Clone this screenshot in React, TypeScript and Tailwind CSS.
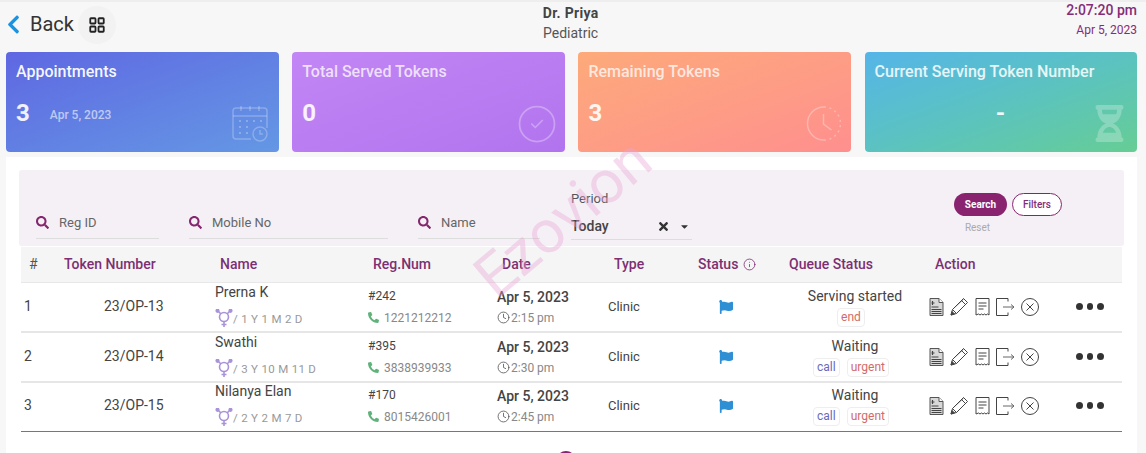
import { ReactNode } from 'react';
import { CircleCheck, Clock, Info, LayoutGrid } from 'lucide-react';
import { FaCaretDown, FaChevronLeft, FaFlag, FaHourglassHalf, FaPhoneAlt, FaSearch, FaTimes } from 'react-icons/fa';

interface Row {
  no: number;
  token: string;
  name: string;
  age: string;
  reg: string;
  phone: string;
  time: string;
  queue: string;
  actions: string[];
}

const ROWS: Row[] = [
  { no: 1, token: '23/OP-13', name: 'Prerna K', age: '/ 1 Y 1 M 2 D', reg: '#242', phone: '1221212212', time: '2:15 pm', queue: 'Serving started', actions: ['end'] },
  { no: 2, token: '23/OP-14', name: 'Swathi', age: '/ 3 Y 10 M 11 D', reg: '#395', phone: '3838939933', time: '2:30 pm', queue: 'Waiting', actions: ['call', 'urgent'] },
  { no: 3, token: '23/OP-15', name: 'Nilanya Elan', age: '/ 2 Y 2 M 7 D', reg: '#170', phone: '8015426001', time: '2:45 pm', queue: 'Waiting', actions: ['call', 'urgent'] },
];

const COLS = 'grid grid-cols-[40px_151px_153px_129px_111px_85px_90px_150px_192px]';

export default function App() {
  return (
    <div className="relative h-[453px] w-[1146px] overflow-hidden bg-[#f7f7f7] font-['Roboto',sans-serif] text-[#333]">
      {/* Cabecera */}
      <div className="flex h-[52px] items-start justify-between border-t-2 border-[#eeeeee] pl-[6px] pr-[9px]">
        <div className="flex items-center pt-[2px]">
          <FaChevronLeft className="-ml-[3px] text-[21px] text-[#1c93df]" />
          <span className="ml-[6px] text-[20px] leading-[38px] text-[#333]">Back</span>
          <div className="ml-[4px] mt-[2px] flex h-[38px] w-[38px] items-center justify-center rounded-full bg-[#f2f2f2]">
            <LayoutGrid size={18} strokeWidth={2.4} className="text-[#222]" />
          </div>
        </div>
        <div className="mr-[41px] pt-[1px] text-center">
          <div className="text-[14px] font-bold leading-[20px] tracking-[0.3px] text-[#444]">Dr. Priya</div>
          <div className="text-[14px] leading-[20px] text-[#555]">Pediatric</div>
        </div>
        <div className="text-right">
          <div className="text-[14px] font-medium leading-[17px] text-[#852c78]">2:07:20 pm</div>
          <div className="mt-[3px] text-[12px] leading-[16px] text-[#852c78]">Apr 5, 2023</div>
        </div>
      </div>

      {/* Tarjetas */}
      <div className="flex gap-[13.5px] pl-[6px]">
        <StatCard title="Appointments" value="3" date="Apr 5, 2023" gradient="bg-gradient-to-br from-[#5f67e2] to-[#6497e4]" titleClass="text-white/95" icon={<CalendarIcon />} />
        <StatCard title="Total Served Tokens" value="0" gradient="bg-gradient-to-br from-[#c286f5] to-[#b274ee]" titleClass="text-white/75" icon={<CircleCheck size={42} strokeWidth={1} className="-my-[3px] -mr-[3px] text-white/30" />} />
        <StatCard title="Remaining Tokens" value="3" gradient="bg-gradient-to-br from-[#fdaa7a] to-[#fe8f8e]" titleClass="text-white/75" icon={<DottedClock />} />
        <StatCard title="Current Serving Token Number" value="-" centerValue gradient="bg-gradient-to-br from-[#55b5e8] to-[#66cd94]" titleClass="text-white/85" icon={<FaHourglassHalf className="-mr-[1px] text-[37px] text-white/25" />} />
      </div>

      {/* Panel principal */}
      <div className="ml-[6px] mt-[5px] h-[296px] w-[1131px] bg-white pl-[13px] pt-[13px]">
        <div className="flex h-[76px] w-[1105px] items-start rounded-[3px] bg-[#f5f0f5]">
          <SearchField label="Reg ID" className="ml-[17px] w-[123px]" />
          <SearchField label="Mobile No" className="ml-[30px] w-[199px]" />
          <SearchField label="Name" className="ml-[30px] w-[122px]" />
          <div className="ml-[31px] w-[121px] pt-[21px]">
            <div className="text-[13px] leading-[16px] text-[#555]">Period</div>
            <div className="flex h-[33px] items-center border-b border-[#ddd] pt-[7px] text-[14px] font-medium text-[#444]">
              <span>Today</span>
              <FaTimes className="ml-[48px] text-[13px] text-[#333]" />
              <FaCaretDown className="ml-[9px] text-[11px] text-[#333]" />
            </div>
          </div>
          <div className="ml-[262px] pt-[23px]">
            <div className="flex gap-[5px]">
              <button className="h-[23px] w-[53px] rounded-full bg-[#8a236f] text-[10px] font-bold text-white">Search</button>
              <button className="h-[23px] w-[50px] rounded-full border border-[#8a236f] bg-white text-[10px] font-medium text-[#852c78]">Filters</button>
            </div>
            <div className="mt-[5px] w-[47px] text-center text-[10px] leading-[14px] text-[#aaa]">Reset</div>
          </div>
        </div>

        {/* Tabla */}
        <div className={`${COLS} ml-[2px] mt-[1px] h-[36px] w-[1101px] items-center border-b border-[#e8e8e8] bg-[#f5f5f5] text-[14px] font-medium text-[#7d2f73]`}>
          <span className="pl-[8px] font-normal text-[#555]">#</span>
          <span className="pl-[3px]">Token Number</span>
          <span className="pl-[8px]">Name</span>
          <span className="pl-[8px]">Reg.Num</span>
          <span className="pl-[8px]">Date</span>
          <span className="pl-[9px]">Type</span>
          <span className="flex items-center gap-[5px] pl-[8px]">
            Status <Info size={13} strokeWidth={1.5} />
          </span>
          <span className="pl-[9px]">Queue Status</span>
          <span className="pl-[5px]">Action</span>
        </div>
        <div className="ml-[2px] w-[1101px] border-b border-[#777]">
          {ROWS.map((r, i) => (
            <TokenRow key={r.no} row={r} last={i === ROWS.length - 1} />
          ))}
        </div>
        <div className="ml-[537px] mt-[19px] h-[20px] w-[20px] rounded-full bg-[#8a236f]" />
      </div>

      {/* Marca de agua */}
      <div className="pointer-events-none absolute left-[459px] top-[188px] origin-center -rotate-[40deg] text-[60px] leading-[60px] text-[#e9a6d8]/40">
        Ezovion
      </div>
    </div>
  );
}

function StatCard({
  title,
  value,
  date,
  gradient,
  titleClass,
  icon,
  centerValue,
}: {
  title: string;
  value: string;
  date?: string;
  gradient: string;
  titleClass: string;
  icon: ReactNode;
  centerValue?: boolean;
}) {
  return (
    <div className={`flex h-[100px] w-[272.7px] flex-col justify-between rounded-[4px] ${gradient}`}>
      <div className={`pl-[10px] pt-[10px] text-[16px] font-medium leading-[20px] ${titleClass}`}>{title}</div>
      <div className="flex items-end justify-between pb-[10px] pl-[10px] pr-[10px]">
        <div className={`flex flex-1 items-center pb-[15px] ${centerValue ? 'justify-center pl-[35px]' : ''}`}>
          <span className="text-[24px] font-bold leading-[28px] text-white/90">{value}</span>
          {date && <span className="ml-[20px] mt-[3px] text-[12px] font-medium text-white/60">{date}</span>}
        </div>
        {icon}
      </div>
    </div>
  );
}

function SearchField({ label, className }: { label: string; className: string }) {
  return (
    <div className={`mt-[37px] flex h-[32px] items-center border-b border-[#ddd] ${className}`}>
      <FaSearch className="text-[13px] text-[#85276f]" />
      <span className="ml-[10px] text-[13px] text-[#666]">{label}</span>
    </div>
  );
}

function TokenRow({ row, last }: { row: Row; last: boolean }) {
  return (
    <div className={`${COLS} items-center ${last ? 'h-[48px] pb-[3px]' : 'h-[50px] border-b-2 border-[#e6e6e6] pb-[1px]'}`}>
      <span className="pl-[3px] text-[14px] text-[#444]">{row.no}</span>
      <span className="pl-[43px] text-[14px] text-[#444]">{row.token}</span>
      <div className="pb-[2px] pl-[3px]">
        <div className="-mt-[3px] text-[14px] leading-[18px] text-[#444]">{row.name}</div>
        <div className="mt-[11px] flex h-[14px] items-center text-[11.500px] leading-[14px] tracking-[0.3px] text-[#999]">
          <GenderIcon />
          <span>{row.age}</span>
        </div>
      </div>
      <div className="pl-[3px]">
        <div className="text-[12px] leading-[18px] text-[#444]">{row.reg}</div>
        <div className="mt-[4px] flex items-center text-[12px] leading-[18px] text-[#888]">
          <FaPhoneAlt className="mr-[5px] text-[11px] text-[#5fb27a]" />
          {row.phone}
        </div>
      </div>
      <div className="pl-[3px]">
        <div className="text-[14px] font-medium leading-[20px] text-[#444]">Apr 5, 2023</div>
        <div className="mt-[2px] flex items-center text-[12px] leading-[18px] text-[#888]">
          <Clock size={13} strokeWidth={1.5} className="mr-[1px] text-[#555]" />
          {row.time}
        </div>
      </div>
      <span className="pl-[3px] text-[13px] text-[#444]">Clinic</span>
      <span className="pl-[29px]">
        <FaFlag className="text-[14px] text-[#2f8fd5]" />
      </span>
      <div className="text-center">
        <div className="text-[14px] leading-[18px] text-[#444]">{row.queue}</div>
        <div className="mt-[3px] flex justify-center gap-[7px] pr-[8px]">
          {row.actions.map((a) => (
            <span key={a} className={`rounded-[4px] border border-[#eeeeee] px-[3px] text-[12px] leading-[17px] ${a === 'call' ? 'text-[#6a6ab8]' : 'text-[#d26a6a]'}`}>
              {a}
            </span>
          ))}
        </div>
      </div>
      <div className="flex items-center">
        <ActionIcons />
        <div className="ml-[37px] flex gap-[4px]">
          <span className="h-[6.500px] w-[6.500px] rounded-full bg-[#333]" />
          <span className="h-[6.500px] w-[6.500px] rounded-full bg-[#333]" />
          <span className="h-[6.500px] w-[6.500px] rounded-full bg-[#333]" />
        </div>
      </div>
    </div>
  );
}

function ActionIcons() {
  return (
    <div className="-ml-[1px] flex items-center gap-[6px] text-[#444]">
      <svg width="15" height="18" viewBox="0 0 14 18">
        <path d="M.5.5h9l4 4v13H.5z" fill="#d8d8d8" stroke="#555" />
        <path d="M9.500.5v4h4" fill="#fff" stroke="#555" />
        <path d="M3 3v4M2 5h3M2 9h7M2 11.500h10M2 13.500h10M2 15.500h10" stroke="#444" strokeWidth="1.200" />
      </svg>
      <svg width="19" height="19" viewBox="0 0 19 19" fill="none" stroke="#444" strokeWidth="1">
        <path d="M1 18l1.500-5.500L13.500 1.500l4 4L6.500 16.500z" />
        <path d="M2.500 12.500l4 4M11.500 3.500l4 4M4 11l9.500-9M8 15l9-9" />
        <path d="M1 18l1-3.500 2.500 2.500z" fill="#444" />
      </svg>
      <svg width="15" height="18" viewBox="0 0 14 18" fill="none" stroke="#444">
        <path d="M.5 17V.5h13V17l-1.500-1-1.500 1-1.500-1-1.500 1-1.500-1-1.500 1-1.500-1z" />
        <path d="M3 5h8M3 8h8M3 11h5" />
      </svg>
      <svg width="19" height="18" viewBox="0 0 19 18" fill="none" stroke="#444">
        <path d="M12 .5H.5v17H12M12 .5v3M12 17.500v-3" />
        <path d="M7 9h11M15 6.500L18 9l-3 2.500" stroke="#666" />
      </svg>
      <svg width="18" height="18" viewBox="0 0 18 18" fill="none" stroke="#444">
        <circle cx="9" cy="9" r="8.500" />
        <path d="M5.500 5.500l7 7M12.500 5.500l-7 7" />
      </svg>
    </div>
  );
}

function GenderIcon() {
  return (
    <svg width="18" height="19" viewBox="0 0 18 19" fill="none" stroke="#a993d8" strokeWidth="1.600" className="shrink-0">
      <circle cx="9" cy="8" r="4.500" />
      <path d="M9 12.500V18M6.500 15.500h5M5.700 4.800L2.500 1.500M12.300 4.800l3.200-3.300" />
      <circle cx="2.500" cy="1.800" r="1.300" fill="#a993d8" />
      <circle cx="15.500" cy="1.800" r="1.300" fill="#a993d8" />
    </svg>
  );
}

function CalendarIcon() {
  return (
    <svg width="36" height="37" viewBox="0 0 36 37" fill="none" stroke="#fff" strokeOpacity="0.25" strokeWidth="1.500" className="mr-[1px]">
      <path d="M19 34H4a3 3 0 0 1-3-3V6a3 3 0 0 1 3-3h28a3 3 0 0 1 3 3v17" />
      <path d="M1 11h34M9 1v5M18 1v5M27 1v5" />
      <path d="M7 16h2M14 16h2M21 16h2M28 16h2M7 22h2M14 22h2M7 28h2M14 28h2" strokeWidth="2" />
      <circle cx="28" cy="29" r="7" />
      <path d="M28 25v4h3" />
    </svg>
  );
}

function DottedClock() {
  return (
    <svg width="40" height="37" viewBox="0 0 37 37" fill="none" stroke="#fff" strokeOpacity="0.3" strokeWidth="1.500" className="-mr-[3px]">
      <path d="M18.500 2A16.500 16.500 0 0 0 18.500 35" />
      <path d="M18.500 2A16.500 16.500 0 0 1 35 18.500A16.500 16.500 0 0 1 18.500 35" strokeDasharray="2 3.500" />
      <path d="M18 9v10l8 6" />
    </svg>
  );
}
